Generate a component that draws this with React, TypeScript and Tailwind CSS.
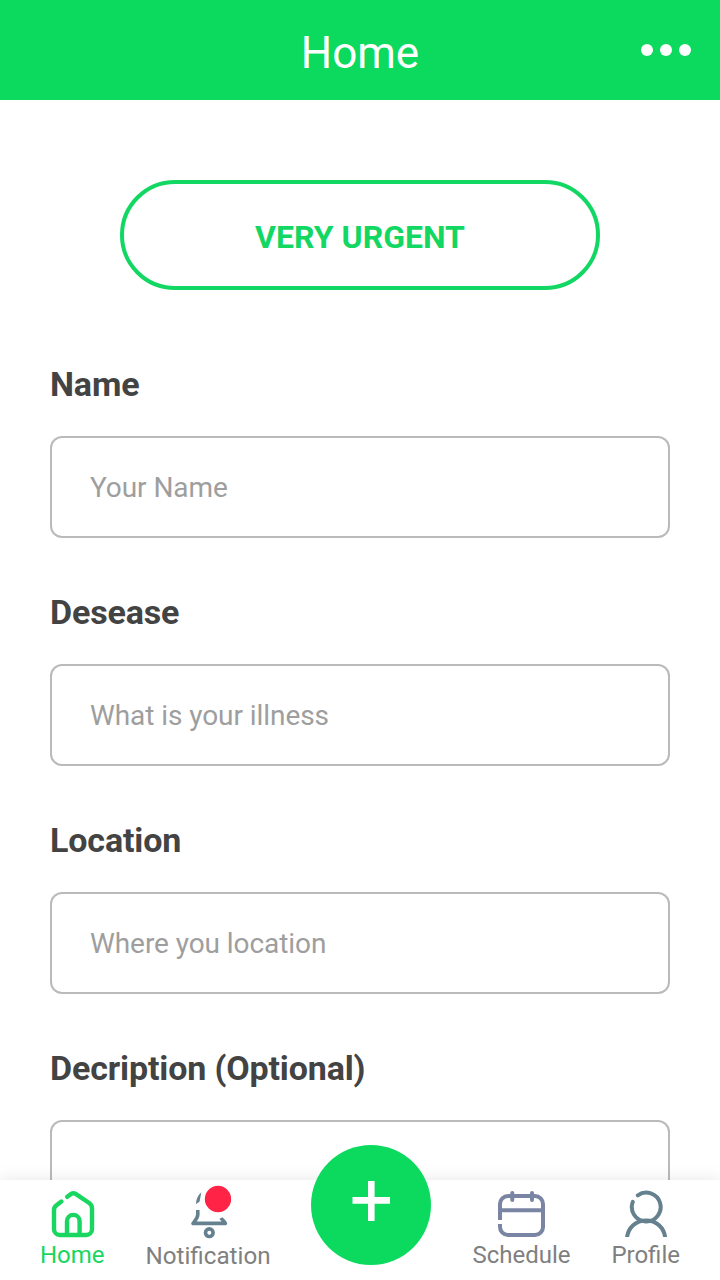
import type { ReactNode } from "react";

function HomeIcon() {
  return (
    <svg className="ml-[2px] h-12 w-11" viewBox="0 0 44 48" fill="none" stroke="#18d660" strokeWidth="4.4" strokeLinecap="round" strokeLinejoin="round">
      <path d="M10.3 11.6L5.2 15.4Q3 17 3 19.8V39.2A5.8 5.8 0 0 0 8.8 45H35.2A5.8 5.8 0 0 0 41 39.2V18.5Q41 15 38.2 13L24.6 3.9Q22.3 2.4 20 4L16.3 6.8" />
      <path d="M16 44V31.2a6.3 6.3 0 0 1 12.6 0V44" />
    </svg>
  );
}

function BellIcon() {
  return (
    <svg className="ml-[2px] h-[54px] w-11" viewBox="0 0 44 54" fill="none" stroke="#65808f" strokeWidth="3.6">
      <path d="M10.8 25V29.5C10.8 33.5 7.4 36.2 6 38.4H38.4C37.4 36.2 35 34.8 34 33" strokeLinejoin="round" />
      <path d="M9 18.5C9.3 14 10.7 10.5 14.3 7.2L12.6 16.5L9.2 19Z" fill="#65808f" stroke="none" />
      <circle cx="22.3" cy="47.7" r="3.8" strokeWidth="3.6" />
      <circle cx="31" cy="14" r="13.2" fill="#ff2346" stroke="none" />
    </svg>
  );
}

function CalendarIcon() {
  return (
    <svg className="ml-[2px] h-12 w-[50px]" viewBox="0 0 50 48" fill="none" stroke="#7985a3" strokeWidth="4">
      <path d="M3 30V14a8 8 0 0 1 8-8H38a8 8 0 0 1 8 8V37a8 8 0 0 1-8 8H11a8 8 0 0 1-8-8V34" />
      <path d="M3 20.3H46" />
      <path d="M15.3 3V10M35 3V10" strokeLinecap="round" />
    </svg>
  );
}

function ProfileIcon() {
  return (
    <svg className="h-[47px] w-11" viewBox="0 0 44 47" fill="none" stroke="#65808f" strokeWidth="4">
      <path d="M13.8 5.4A14.4 14.4 0 1 1 8.8 11.9" strokeLinecap="round" />
      <path d="M3 47.5C4.2 37.5 11.8 30.4 22.1 30.4S40 37.5 41.2 47.5" />
    </svg>
  );
}

function Field({ label, placeholder }: { label: string; placeholder?: string }) {
  return (
    <label className="block h-[228px]">
      <span className="block h-[76px] text-[34px] leading-[48px] font-bold tracking-[-0.14px] text-[#434343]">{label}</span>
      <input
        className="block h-[102px] w-full rounded-xl border-2 border-[#bababa] bg-white px-[38px] text-[28px] tracking-[-0.07px] text-[#434343] outline-none placeholder:text-[#9e9e9e]"
        placeholder={placeholder}
      />
    </label>
  );
}

function NavItem({ label, active, low, children }: { label: string; active?: boolean; low?: boolean; children: ReactNode }) {
  return (
    <a className={`flex flex-col items-center text-2xl leading-7 ${active ? "text-[#18d660]" : "text-[#808080]"}`}>
      <span className="flex h-[61px] items-start justify-center pt-[10px]">
        <span className={low ? "-mt-[5px]" : ""}>{children}</span>
      </span>
      <span className={low ? "pt-px text-[24.2px]" : ""}>{label}</span>
    </a>
  );
}

export default function App() {
  return (
    <div className="relative flex h-[1280px] w-[720px] flex-col overflow-hidden bg-white font-['Roboto',sans-serif]">
      <header className="grid h-[100px] shrink-0 grid-cols-[1fr_auto_1fr] items-center bg-[#0bda5e] px-[29px]">
        <span />
        <h1 className="pt-[5px] text-[44px] leading-[52px] text-white">Home</h1>
        <div className="flex justify-end gap-[7px]">
          <span className="size-3 rounded-full bg-white" />
          <span className="size-3 rounded-full bg-white" />
          <span className="size-3 rounded-full bg-white" />
        </div>
      </header>
      <main className="min-h-0 flex-1 overflow-hidden px-[50px] pt-20">
        <button className="mx-auto block h-[110px] w-[480px] rounded-full border-4 border-[#12d762] pt-1 text-[32px] font-bold text-[#12d762]">
          VERY URGENT
        </button>
        <form className="pt-[70px]">
          <Field label="Name" placeholder="Your Name" />
          <Field label="Desease" placeholder="What is your illness" />
          <Field label="Location" placeholder="Where you location" />
          <Field label="Decription (Optional)" />
        </form>
      </main>
      <nav className="relative flex h-[100px] shrink-0 justify-between bg-white px-10 shadow-[0_0_16px_rgba(0,0,0,0.1)]">
        <NavItem label="Home" active>
          <HomeIcon />
        </NavItem>
        <NavItem label="Notification" low>
          <BellIcon />
        </NavItem>
        <button className="-mt-[35px] flex size-[120px] justify-center rounded-full bg-[#0bda5e] pt-9" aria-label="Add">
          <svg className="h-10 w-[38px]" viewBox="0 0 38 40" fill="none" stroke="#fff" strokeWidth="6.6">
            <path d="M0.5 19.4H38M19.3 0V40" />
          </svg>
        </button>
        <NavItem label="Schedule">
          <CalendarIcon />
        </NavItem>
        <NavItem label="Profile">
          <ProfileIcon />
        </NavItem>
      </nav>
    </div>
  );
}
